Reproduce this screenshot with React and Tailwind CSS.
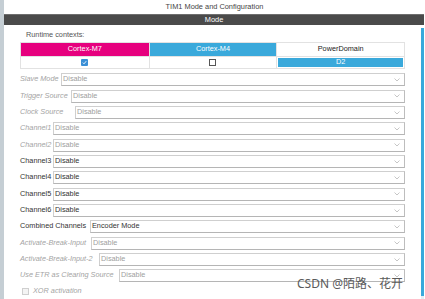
const font = { fontFamily: '"Liberation Sans", Arial, sans-serif' };

const rows = [
  { label: "Slave Mode", w: "w-[41px]", value: "Disable", off: true },
  { label: "Trigger Source", w: "w-[51px]", value: "Disable", off: true },
  { label: "Clock Source", w: "w-[55px]", value: "Disable", off: true },
  { label: "Channel1", w: "w-[33px]", value: "Disable", off: true },
  { label: "Channel2", w: "w-[33px]", value: "Disable", off: true },
  { label: "Channel3", w: "w-[33px]", value: "Disable" },
  { label: "Channel4", w: "w-[33px]", value: "Disable" },
  { label: "Channel5", w: "w-[33px]", value: "Disable" },
  { label: "Channel6", w: "w-[33px]", value: "Disable" },
  { label: "Combined Channels", w: "w-[70px]", value: "Encoder Mode" },
  { label: "Activate-Break-Input", w: "w-[71px]", value: "Disable", off: true },
  { label: "Activate-Break-Input-2", w: "w-[79px]", value: "Disable", off: true },
  { label: "Use ETR as Clearing Source", w: "w-[99px]", value: "Disable", off: true },
];

function Chevron() {
  return (
    <svg width="6" height="4" viewBox="0 0 6 4" className="mr-[4px]">
      <path d="M0.5 0.5 L3 3 L5.5 0.5" fill="none" stroke="#b8b8b8" strokeWidth="0.8" />
    </svg>
  );
}

function Row({ label, w, value, off }) {
  return (
    <div className="flex h-[16.33px] items-center">
      <span
        className={`${w} shrink-0 whitespace-nowrap text-[7.3px] ${
          off ? "italic text-[#a4a4a4]" : "text-[#333]"
        }`}
      >
        {label}
      </span>
      <div className="flex h-[13px] flex-1 items-center justify-between border border-[#cfcfcf] border-b-[#b5b5b5] border-r-[#bdbdbd] bg-white">
        <span className={`pl-[1px] text-[7.3px] ${off ? "text-[#a0a0a0]" : "text-[#333]"}`}>
          {value}
        </span>
        <Chevron />
      </div>
    </div>
  );
}

export default function App() {
  return (
    <div className="relative flex h-[299px] w-[425px] overflow-hidden bg-white" style={font}>
      <div className="w-[4px] shrink-0 bg-[#c5ced4]" />
      <div className="flex flex-1 flex-col">
        <div className="flex h-[14px] items-center justify-center text-[7.4px] text-[#444]">
          TIM1 Mode and Configuration
        </div>
        <div className="mr-[1px] flex h-[11px] items-center justify-center border-t border-[#6e6e6e] bg-[#4a4a4a] text-[7.4px] text-white">
          Mode
        </div>
        <div className="flex flex-1">
          <div className="flex-1 pl-[16px] pr-[16px]">
            <div className="flex h-[17px] items-end pb-[1px] pl-[6px] text-[7.3px] text-[#555]">
              Runtime contexts:
            </div>
            <div className="grid grid-cols-3 border border-[#e2e2e2] text-[7.3px]">
              <div className="flex h-[13px] items-center justify-center bg-[#e6007e] text-white">
                Cortex-M7
              </div>
              <div className="flex h-[13px] items-center justify-center border-l border-[#e2e2e2] bg-[#3aa9db] text-white">
                Cortex-M4
              </div>
              <div className="flex h-[13px] items-center justify-center border-l border-[#e2e2e2] text-[#222]">
                PowerDomain
              </div>
              <div className="flex h-[12px] items-center justify-center border-t border-[#e2e2e2]">
                <span className="flex h-[7px] w-[7px] items-center justify-center rounded-[1px] bg-[#3a8fd6]">
                  <svg width="5" height="5" viewBox="0 0 5 5">
                    <path d="M0.8 2.6 L2 3.8 L4.2 1.2" fill="none" stroke="white" strokeWidth="0.9" />
                  </svg>
                </span>
              </div>
              <div className="flex h-[12px] items-center justify-center border-l border-t border-[#e2e2e2]">
                <span className="h-[7px] w-[7px] border border-[#555] bg-white" />
              </div>
              <div className="flex h-[12px] border-l border-t border-[#e2e2e2] p-[1px]">
                <div className="flex flex-1 items-center justify-center bg-[#3aa9db] text-white">D2</div>
              </div>
            </div>
            <div className="mt-[3px]">
              {rows.map((r) => (
                <Row key={r.label} {...r} />
              ))}
            </div>
            <div className="flex h-[15px] items-center gap-[4px] pl-[2px]">
              <span className="h-[7px] w-[7px] border border-[#cfcfcf] bg-[#f4f4f4]" />
              <span className="text-[7.3px] italic text-[#a4a4a4]">XOR activation</span>
            </div>
          </div>
          <div className="mr-[1px] flex w-[3px] flex-col pt-[3px]">
            <div className="h-[268px] bg-[#3aa9db]" />
            <div className="flex-1 bg-[#e3eef5]" />
          </div>
        </div>
      </div>
      <div
        className="absolute left-[297px] top-[275px] text-[12px] text-[#5a5a5a]"
        style={{ fontFamily: '"Noto Sans", "Noto Sans CJK SC", sans-serif' }}
      >
        CSDN @陌路、花开
      </div>
    </div>
  );
}
